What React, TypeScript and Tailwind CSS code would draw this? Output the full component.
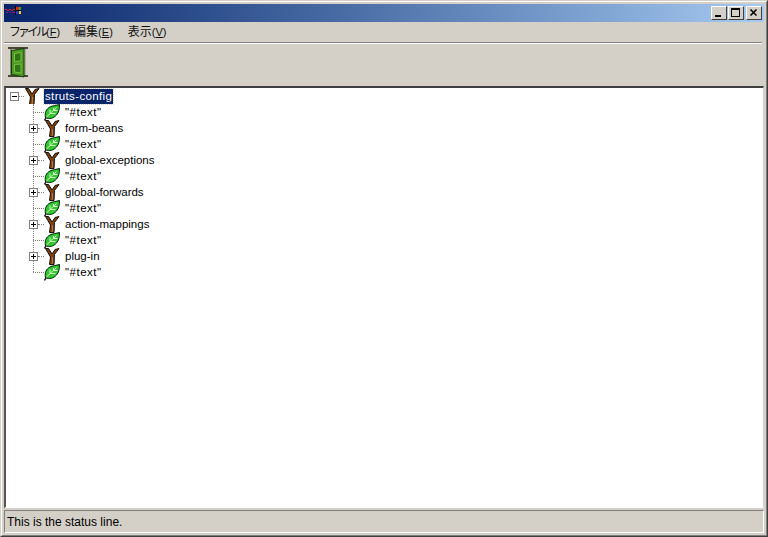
import React from 'react';

const uiFont = { fontFamily: '"Liberation Sans", "Noto Sans CJK JP", sans-serif' };

// tree model, same order as the window
const children = [
  { label: '"#text"', leaf: true },
  { label: 'form-beans', leaf: false },
  { label: '"#text"', leaf: true },
  { label: 'global-exceptions', leaf: false },
  { label: '"#text"', leaf: true },
  { label: 'global-forwards', leaf: false },
  { label: '"#text"', leaf: true },
  { label: 'action-mappings', leaf: false },
  { label: '"#text"', leaf: true },
  { label: 'plug-in', leaf: false },
  { label: '"#text"', leaf: true },
];

const menus = [
  { text: 'ファイル', key: 'F', cls: 'tracking-[-3px] mr-[1px]', gap: 'mr-[14px]' },
  { text: '編集', key: 'E', cls: '', gap: 'mr-[15px]' },
  { text: '表示', key: 'V', cls: '', gap: '' },
];

const AppIcon = () => (
  <svg width="16" height="16" viewBox="0 0 16 16" shapeRendering="crispEdges">
    <path d="M0 4h2v1H0zM2 5h2v1H2zM4 4h2v1H4zM6 5h2v1H6zM8 4h2v1H8z" fill="#e0202a" />
    <path d="M1 7h2v1H1zM4 7h2v1H4zM7 7h3v1H7z" fill="#7a1f9a" />
    <rect x="11" y="2" width="3" height="3" fill="#e02a1a" />
    <rect x="14" y="2" width="2" height="3" fill="#2fae2a" />
    <rect x="11" y="6" width="3" height="3" fill="#2a3ac8" />
    <rect x="14" y="6" width="2" height="3" fill="#f0d020" />
    <path d="M10 1h1v9h-1zM11 5h5v1h-5z" fill="#000" />
  </svg>
);

const DoorIcon = () => (
  <svg width="20" height="31" viewBox="0 0 20 31" className="block">
    <rect x="2" y="2" width="2" height="27" fill="#8a8a6a" />
    <rect x="15" y="2" width="3" height="27" fill="#b4b098" />
    <rect x="0" y="0" width="20" height="2" fill="#4a4636" />
    <rect x="0" y="28" width="20" height="2" fill="#4a4636" />
    <path d="M3.500 3.500L16 1.500V30L3.500 27.500z" fill="#4c9a22" stroke="#14380e" strokeWidth="1" />
    <path d="M6.500 6.500L13 5.500V14L6.500 14.500zM6.500 17.500L13 17V26L6.500 25z" fill="#2f7416" stroke="#7cc044" strokeWidth="1" />
  </svg>
);

const TreeIcon = () => (
  <svg width="16" height="17" viewBox="0 0 16 17" className="block">
    <path
      d="M5.500 16.500L6.500 9 1.500.5H4.500L8 6 11 1.500 15 .5 10.500 6.500 10 16.500z"
      fill="#7c4210"
      stroke="#140c04"
      strokeWidth="1"
      strokeLinejoin="round"
    />
    <path d="M8.500 9l-.3 7" stroke="#b08848" strokeWidth="1" />
  </svg>
);

const LeafIcon = () => (
  <svg width="16" height="17" viewBox="0 0 16 17" className="block">
    <path d="M.5 16.500L2.500 13" stroke="#000" strokeWidth="1.300" />
    <path
      d="M1.500 13.500C.5 9 2 5 6 3 9 1.500 12 1.500 15.500.5 15.500 4 15 8.500 12.500 11 9.500 14.500 5 15.500 1.500 13.500z"
      fill="#2fc62f"
      stroke="#062006"
      strokeWidth="1"
      strokeLinejoin="round"
    />
    <path d="M2.500 13L12.500 3.500M6 9.500V5.500M6 9.500H11.500M9.500 6.500V4M9.500 6.500H13.500" stroke="#d8f8c8" strokeWidth="1" fill="none" />
  </svg>
);

const Expander = ({ open }: { open: boolean }) => (
  <span className="relative block w-[9px] h-[9px] border border-[#808080] bg-white shrink-0">
    <span className="absolute left-[1px] top-[3px] w-[5px] h-px bg-black" />
    {!open && <span className="absolute left-[3px] top-[1px] w-px h-[5px] bg-black" />}
  </span>
);

const CaptionButton = ({ children: glyph, className }: { children: React.ReactNode; className?: string }) => (
  <div
    className={`relative w-4 h-[14px] bg-[#d4d0c8] border-t border-l border-t-white border-l-white border-r border-b border-r-[#404040] border-b-[#404040] ${className ?? ''}`}
  >
    {glyph}
  </div>
);

export default function App() {
  return (
    <div
      className="w-[768px] h-[537px] overflow-hidden bg-[#d4d0c8] text-black text-[12px] border-t border-l border-t-[#d4d0c8] border-l-[#d4d0c8] border-r border-b border-r-[#404040] border-b-[#404040]"
      style={uiFont}
    >
      <div className="h-full flex flex-col border-t border-l border-t-white border-l-white border-r border-b border-r-[#808080] border-b-[#808080] p-[2px]">
        {/* title bar */}
        <div className="h-[18px] shrink-0 flex items-center pl-px pr-[2px] bg-gradient-to-r from-[#0a246a] to-[#a6caf0]">
          <AppIcon />
          <div className="ml-auto flex items-center">
            <CaptionButton>
              <span className="absolute left-[3px] bottom-[2px] w-[6px] h-[2px] bg-black" />
            </CaptionButton>
            <CaptionButton className="ml-px">
              <span className="absolute left-[2px] top-px w-[9px] h-[9px] border border-black border-t-2" />
            </CaptionButton>
            <CaptionButton className="ml-[2px]">
              <svg width="14" height="12" viewBox="0 0 14 12" className="absolute left-0 top-0">
                <path d="M3.500 2.500l6 6M9.500 2.500l-6 6" stroke="#000" strokeWidth="1.600" />
              </svg>
            </CaptionButton>
          </div>
        </div>

        {/* menu bar */}
        <div className="h-5 shrink-0 flex items-center pl-[5px] text-[#111]">
          {menus.map((m) => (
            <span key={m.key} className={`whitespace-nowrap leading-none ${m.gap}`}>
              <span className={m.cls}>{m.text}</span>
              <span className="text-[11px]">
                (<span className="underline">{m.key}</span>)
              </span>
            </span>
          ))}
        </div>
        <div className="h-[2px] shrink-0 bg-white border-t border-t-[#808080] mr-[2px]" />

        {/* toolbar */}
        <div className="h-[42px] shrink-0 flex items-start pt-[3px] pl-[4px]">
          <DoorIcon />
        </div>

        {/* tree */}
        <div className="flex-1 min-h-0 relative bg-white border-t-2 border-l-2 border-t-[#404040] border-l-[#555555] border-r border-b border-r-[#d4d0c8] border-b-white">
          <div className="absolute left-[27px] top-[16px] h-[168px] border-l border-dotted border-l-[#808080]" />
          <div className="flex items-center h-4 pl-1">
            <Expander open />
            <span className="w-[5px] border-t border-dotted border-t-[#808080]" />
            <span className="w-4 h-4 overflow-hidden">
              <TreeIcon />
            </span>
            <span className="ml-[4px] px-px h-[15px] leading-[15px] text-[11.5px] tracking-[0.35px] bg-[#0a246a] text-white outline-1 outline-dotted outline-[#d4d0c8]">
              struts-config
            </span>
          </div>
          {children.map((c, i) => (
            <div key={i} className="flex items-center h-4 relative">
              {c.leaf ? (
                <span className="ml-[27px] w-[11px] border-t border-dotted border-t-[#808080]" />
              ) : (
                <>
                  <span className="ml-[23px] relative">
                    <Expander open={false} />
                  </span>
                  <span className="w-[6px] border-t border-dotted border-t-[#808080]" />
                </>
              )}
              <span className="w-4 h-4 relative shrink-0">
                <span className="absolute left-0 top-0">{c.leaf ? <LeafIcon /> : <TreeIcon />}</span>
              </span>
              <span className={`ml-[5px] pt-px whitespace-nowrap leading-none text-[11.5px] ${c.leaf ? 'tracking-[0.5px]' : ''}`}>
                {c.label}
              </span>
            </div>
          ))}
        </div>

        {/* status line */}
        <div className="h-[23px] mt-[2px] shrink-0 flex items-center pl-[2px] border-t border-l border-t-[#808080] border-l-[#808080] border-r border-b border-r-white border-b-white">
          This is the status line.
        </div>
      </div>
    </div>
  );
}
